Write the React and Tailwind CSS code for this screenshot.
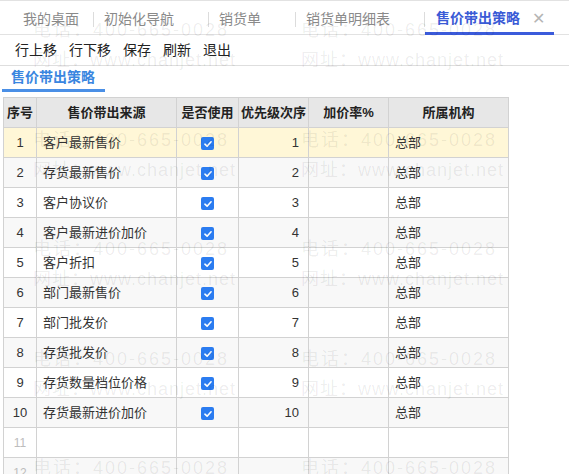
import React from "react";

const tabs = [
  { label: "我的桌面", w: "w-[93px]", pl: "pl-[23px]" },
  { label: "初始化导航", w: "w-[114px]", pl: "pl-[10px]" },
  { label: "销货单", w: "w-[86px]", pl: "pl-[10px]" },
  { label: "销货单明细表", w: "w-[128px]", pl: "pl-[10px]" },
];

const tools = ["行上移", "行下移", "保存", "刷新", "退出"];

const rows = [
  { id: 1, name: "客户最新售价", order: 1 },
  { id: 2, name: "存货最新售价", order: 2 },
  { id: 3, name: "客户协议价", order: 3 },
  { id: 4, name: "客户最新进价加价", order: 4 },
  { id: 5, name: "客户折扣", order: 5 },
  { id: 6, name: "部门最新售价", order: 6 },
  { id: 7, name: "部门批发价", order: 7 },
  { id: 8, name: "存货批发价", order: 8 },
  { id: 9, name: "存货数量档位价格", order: 9 },
  { id: 10, name: "存货最新进价加价", order: 10 },
  { id: 11 },
  { id: 12 },
];

const Checkbox = () => (
  <span className="flex h-[13px] w-[13px] items-center justify-center rounded-[2px] bg-[#2b7cf0] mt-[2px]">
    <svg viewBox="0 0 12 12" className="h-[10px] w-[10px]">
      <path d="M2.3 6.2 L4.9 8.6 L9.7 3.4" fill="none" stroke="#fff" strokeWidth="1.9" strokeLinecap="round" strokeLinejoin="round" />
    </svg>
  </span>
);

const Watermark = () => {
  const blocks = [0, 1, 2, 3, 4];
  return (
    <div className="pointer-events-none absolute inset-0 z-10 overflow-hidden pt-[19px] text-[18px] leading-[22px] text-black/[0.075]">
      {blocks.map((b) => (
        <div key={b} className="flex h-[109.5px] pl-[33px]">
          {[0, 1].map((c) => (
            <div key={c} className="flex w-[274px] flex-col gap-[8px]">
              <span className="whitespace-nowrap tracking-[2px]">电话：400-665-0028</span>
              <span className="whitespace-nowrap tracking-[1px]">网址：www.chanjet.net</span>
            </div>
          ))}
        </div>
      ))}
    </div>
  );
};

export default function App() {
  const cell = "flex items-center border-r border-b border-[#d2d2d2]";

  return (
    <div className="relative h-[474px] w-[569px] overflow-hidden bg-white font-['Liberation_Sans','Noto_Sans_CJK_SC',sans-serif] text-[#222]">
      {/* tabs */}
      <div className="flex h-[35px] items-stretch border-t border-b border-[#e2e2e2]">
        {tabs.map((t) => (
          <React.Fragment key={t.label}>
            <div className={`flex items-center pt-[3px] text-[14px] text-[#8a8a8a] ${t.w} ${t.pl}`}>{t.label}</div>
            <div className="flex items-center pt-[3px]">
              <span className="h-[15px] w-px bg-[#dcdcdc]" />
            </div>
          </React.Fragment>
        ))}
        <div className="mb-[-1px] flex w-[129px] items-center border-b-[3px] border-[#3b5bdb] pl-[11px] pt-[4px] text-[14px]">
          <span className="font-bold text-[#3a5bd6]">售价带出策略</span>
          <span className="ml-[12px] text-[16px] leading-none text-[#b5b5b5]">✕</span>
        </div>
      </div>

      {/* toolbar */}
      <div className="flex h-[31px] items-center gap-[12px] border-b border-[#dedede] pl-[15px] text-[14px] text-[#222]">
        {tools.map((t) => (
          <span key={t}>{t}</span>
        ))}
      </div>

      {/* sub tab */}
      <div className="h-[31px] pl-[2px]">
        <div className="flex h-[26px] w-[103px] items-center border-b-[3px] border-[#4a8fe6] pl-[9px] text-[14px] font-bold text-[#3a86e0]">
          售价带出策略
        </div>
      </div>

      {/* grid */}
      <div className="ml-[3px] grid w-[506px] grid-cols-[33px_140px_62px_70px_80px_120px] border-l border-t border-[#d2d2d2] text-[13px]">
        <div className={`${cell} h-[30px] justify-center bg-[#e7e7e7] font-bold`}>序号</div>
        <div className={`${cell} h-[30px] justify-center bg-[#e7e7e7] font-bold`}>售价带出来源</div>
        <div className={`${cell} h-[30px] justify-center bg-[#e7e7e7] font-bold`}>是否使用</div>
        <div className={`${cell} h-[30px] justify-center bg-[#e7e7e7] font-bold`}>优先级次序</div>
        <div className={`${cell} h-[30px] justify-center bg-[#e7e7e7] font-bold`}>加价率%</div>
        <div className={`${cell} h-[30px] justify-center bg-[#e7e7e7] font-bold`}>所属机构</div>

        {rows.map((r) => {
          const bg = r.id === 1 ? "bg-[#fff7d7]" : r.id % 2 === 0 ? "bg-[#f8f8f8]" : "bg-white";
          const filled = Boolean(r.name);
          return (
            <React.Fragment key={r.id}>
              <div className={`${cell} h-[30px] justify-center ${bg} ${filled ? "text-[#333]" : "text-[12px] text-[#bdbdbd]"}`}>{r.id}</div>
              <div className={`${cell} h-[30px] pl-[6px] ${bg} text-[#333]`}>{r.name}</div>
              <div className={`${cell} h-[30px] justify-center ${bg}`}>{filled && <Checkbox />}</div>
              <div className={`${cell} h-[30px] justify-end pr-[9px] ${bg} text-[#333]`}>{r.order}</div>
              <div className={`${cell} h-[30px] ${bg}`} />
              <div className={`${cell} h-[30px] pl-[6px] ${bg} text-[#333]`}>{filled ? "总部" : ""}</div>
            </React.Fragment>
          );
        })}
      </div>

      <Watermark />
    </div>
  );
}
